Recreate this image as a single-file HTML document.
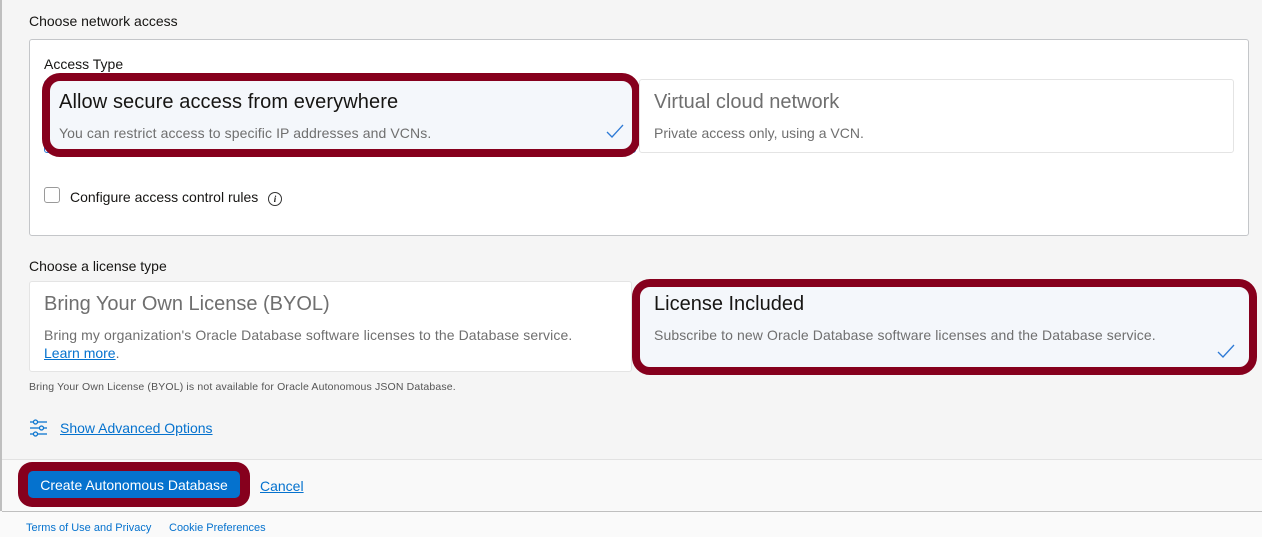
<!DOCTYPE html>
<html><head><style>
*{margin:0;padding:0;box-sizing:border-box}
body{width:1262px;height:537px;background:#f5f5f5;font-family:"Liberation Sans",Arial,sans-serif;position:relative;overflow:hidden;color:#161513}
.a{position:absolute}
.lbl{font-size:14px;color:#161513}
.card{position:absolute;background:#fff;border:1px solid #e4e4e4;border-radius:3px}
.sel{background:#f4f7fb;border:1px solid #2d7ad6}
.t{position:absolute;font-size:20px;color:#6f6f6f;white-space:nowrap}
.d{position:absolute;font-size:14px;color:#6f6f6f;white-space:nowrap}
.hl{position:absolute;border:8px solid #86001d;border-radius:18px}
a{color:#0572ce}
</style></head><body>
<div class="a" style="left:0;top:0;width:2px;height:511px;background:#bfbfbf"></div>
<div class="a lbl" style="left:29px;top:13px">Choose network access</div>
<div class="a" style="left:29px;top:39px;width:1220px;height:197px;background:#fff;border:1px solid #c4c6c9;border-radius:3px"></div>
<div class="a lbl" style="left:44px;top:56px">Access Type</div>
<div class="card sel" style="left:44px;top:80px;width:592px;height:73px"></div>
<div class="hl" style="left:42px;top:73px;width:598px;height:84px;background:#f4f7fb"></div>
<div class="t" style="left:59px;top:91px;color:#161513;letter-spacing:0.1px">Allow secure access from everywhere</div>
<div class="d" style="left:59px;top:125px;letter-spacing:0.1px">You can restrict access to specific IP addresses and VCNs.</div>
<svg class="a" style="left:606px;top:124px" width="18" height="14"><path d="M1 8 L6 13 L17 1" fill="none" stroke="#2d7ad6" stroke-width="1.3"/></svg>
<div class="card" style="left:639px;top:79px;width:595px;height:74px"></div>
<div class="t" style="left:654px;top:91px">Virtual cloud network</div>
<div class="d" style="left:654px;top:125px">Private access only, using a VCN.</div>
<div class="a" style="left:44px;top:187px;width:16px;height:16px;border:1px solid #9a9a9a;border-radius:3px;background:#fff"></div>
<div class="a lbl" style="left:70px;top:189px">Configure access control rules</div>
<div class="a" style="left:268px;top:192px;width:14px;height:14px;border:1px solid #333;border-radius:50%;font:italic bold 9px 'Liberation Serif',serif;text-align:center;line-height:12px">i</div>
<div class="a lbl" style="left:29px;top:258px">Choose a license type</div>
<div class="card" style="left:29px;top:281px;width:603px;height:91px"></div>
<div class="t" style="left:44px;top:293px">Bring Your Own License (BYOL)</div>
<div class="d" style="left:44px;top:327px;letter-spacing:0.1px">Bring my organization's Oracle Database software licenses to the Database service.</div>
<div class="d" style="left:44px;top:345px"><a href="#">Learn more</a>.</div>
<div class="hl" style="left:632px;top:279px;width:625px;height:96px;background:#f4f7fb"></div>
<div class="t" style="left:654px;top:293px;color:#161513">License Included</div>
<div class="d" style="left:654px;top:327px;letter-spacing:0.1px">Subscribe to new Oracle Database software licenses and the Database service.</div>
<svg class="a" style="left:1217px;top:344px" width="18" height="14"><path d="M1 8 L6 13 L17 1" fill="none" stroke="#2d7ad6" stroke-width="1.3"/></svg>
<div class="a" style="left:29px;top:381px;font-size:10.5px;color:#555;letter-spacing:0.15px">Bring Your Own License (BYOL) is not available for Oracle Autonomous JSON Database.</div>
<svg class="a" style="left:29px;top:419px" width="20" height="18" stroke="#0572ce" fill="none" stroke-width="1.2"><path d="M1 3h3M9 3h9M1 9h9M15 9h3M1 15h3M9 15h9"/><circle cx="6.5" cy="3" r="2"/><circle cx="12.5" cy="9" r="2"/><circle cx="6.5" cy="15" r="2"/></svg>
<div class="a" style="left:60px;top:420px;font-size:14px"><a href="#">Show Advanced Options</a></div>
<div class="a" style="left:2px;top:459px;width:1260px;height:53px;background:#f9f9f9;border-top:1px solid #e2e2e2;border-bottom:1px solid #bfbfbf"></div>
<div class="a" style="left:18px;top:462px;width:232px;height:45px;background:#86001d;border-radius:14px"></div>
<div class="a" style="left:28px;top:471px;width:212px;height:27px;background:#0572ce;border-radius:5px;color:#fff;font-size:14px;line-height:29px;text-align:center">Create Autonomous Database</div>
<div class="a" style="left:260px;top:478px;font-size:14px"><a href="#">Cancel</a></div>
<div class="a" style="left:0;top:512px;width:1262px;height:25px;background:#fafafa"></div>
<div class="a" style="left:26px;top:522px;font-size:11px;color:#0572ce">Terms of Use and Privacy</div>
<div class="a" style="left:169px;top:522px;font-size:11px;color:#0572ce">Cookie Preferences</div>
</body></html>
